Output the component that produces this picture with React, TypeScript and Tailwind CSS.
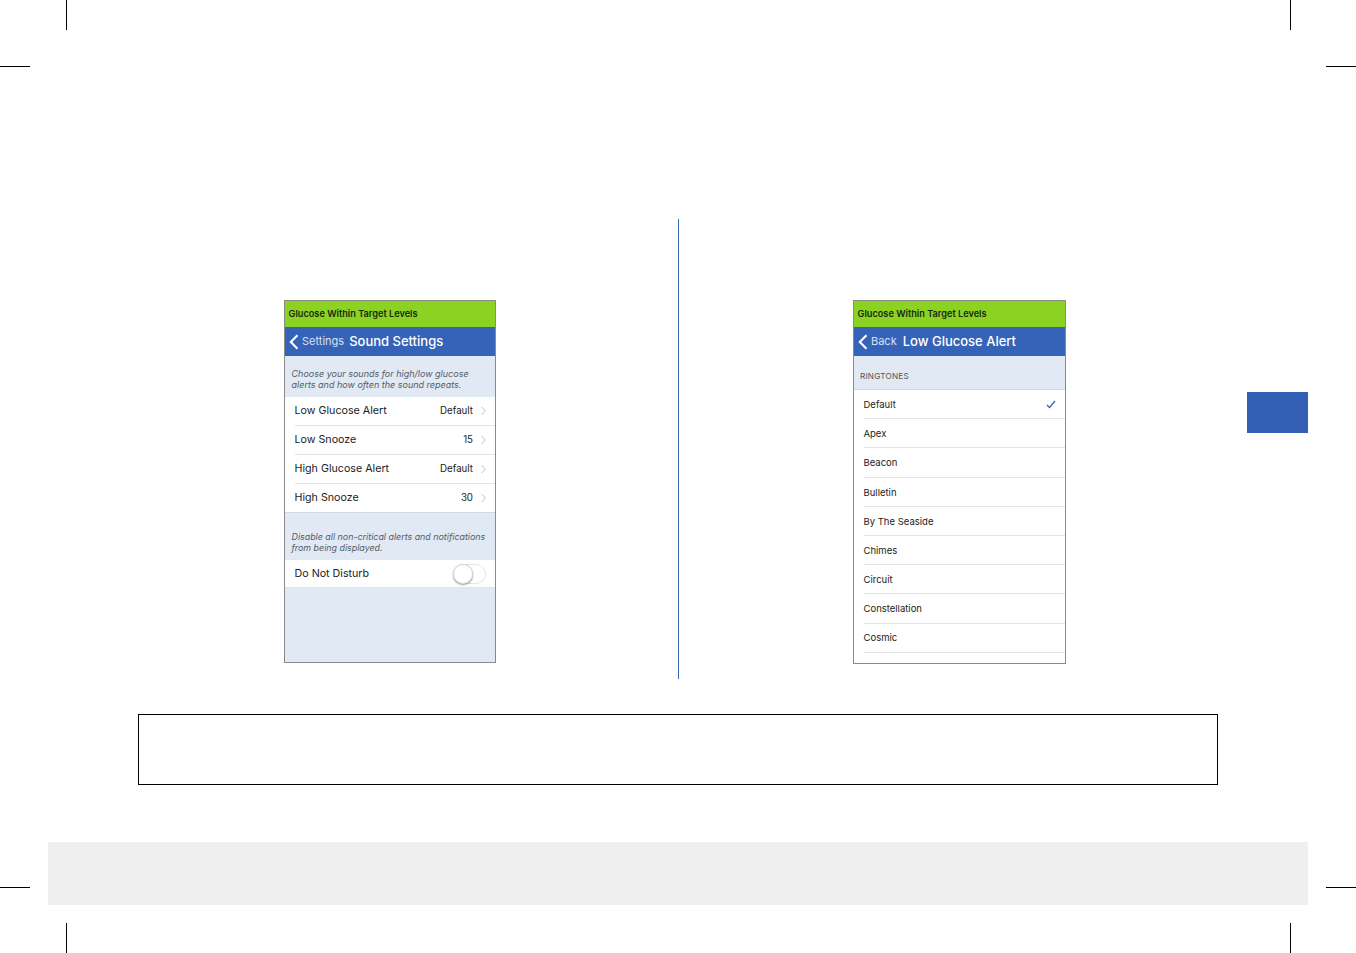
import React from "react";

const FONT = { fontFamily: '"Inter", "Liberation Sans", sans-serif' };

function Chevron() {
  return (
    <svg width="5" height="10" viewBox="0 0 5 10" fill="none" className="ml-[8px]">
      <path d="M0.6 1l3.8 4L0.6 9" stroke="#c0c0c6" strokeWidth="1" />
    </svg>
  );
}

function Back() {
  return (
    <svg width="10" height="16" viewBox="0 0 10 16" fill="none">
      <path d="M8.5 1.2L1.8 8l6.7 6.8" stroke="#fff" strokeWidth="2.1" />
    </svg>
  );
}

function Row({ label, value, last }: { label: string; value: string; last?: boolean }) {
  return (
    <div className="bg-white pl-[9.5px]">
      <div className={`flex items-center pr-[9px] ${last ? "h-[28px]" : "h-[29px] border-b border-[#e4e4e6]"}`}>
        <span className="text-[10.7px] text-[#222]">{label}</span>
        <span className="ml-auto text-[9.7px] text-[#222]">{value}</span>
        <Chevron />
      </div>
    </div>
  );
}

function Tone({ label, check }: { label: string; check?: boolean }) {
  return (
    <div className="pl-[9.5px]">
      <div className="h-[29.2px] flex items-center pt-[2px] pr-[9px] border-b border-[#e4e4e6]">
        <span className="text-[9.5px] text-[#222]">{label}</span>
        {check && (
          <svg width="10" height="9" viewBox="0 0 10 9" fill="none" className="ml-auto -mt-[2px]">
            <path d="M1 5l2.5 2.5L9 1" stroke="#3563b8" strokeWidth="1.3" />
          </svg>
        )}
      </div>
    </div>
  );
}

function Head({ back, title, gap }: { back: string; title: string; gap: string }) {
  return (
    <>
      <div className="h-[26px] bg-[#8bd223] flex items-center pl-[3.5px] text-[9.2px] font-semibold text-[#1a2a10] shrink-0">
        Glucose Within Target Levels
      </div>
      <div className="h-[29px] bg-[#3563b8] flex items-center pl-[4px] text-white shrink-0">
        <Back />
        <span className="ml-[3px] text-[11px] text-[#d5e0f2]">{back}</span>
        <span className={`${gap} text-[13px] font-medium`}>{title}</span>
      </div>
    </>
  );
}

function Note({ children, cls }: { children: React.ReactNode; cls: string }) {
  return <div className={`pl-[6.5px] leading-[11px] italic whitespace-nowrap text-[#555c68] ${cls}`}>{children}</div>;
}

export default function App() {
  return (
    <div className="relative w-[1356px] h-[953px] bg-white overflow-hidden" style={FONT}>
      {/* crop marks */}
      <div className="absolute left-[66px] top-0 w-px h-[30px] bg-black" />
      <div className="absolute left-[1290px] top-0 w-px h-[30px] bg-black" />
      <div className="absolute left-[66px] top-[923px] w-px h-[30px] bg-black" />
      <div className="absolute left-[1290px] top-[923px] w-px h-[30px] bg-black" />
      <div className="absolute left-0 top-[66px] w-[30px] h-px bg-black" />
      <div className="absolute left-[1326px] top-[66px] w-[30px] h-px bg-black" />
      <div className="absolute left-0 top-[887px] w-[30px] h-px bg-black" />
      <div className="absolute left-[1326px] top-[887px] w-[30px] h-px bg-black" />

      <div className="absolute left-[1247px] top-[392px] w-[61px] h-[41px] bg-[#3360b5]" />

      <div className="absolute left-[678px] top-[219px] w-px h-[460px] bg-[#3563b8]" />

      {/* left phone */}
      <div className="absolute left-[284px] top-[300px] w-[212px] h-[363px] border border-[#8a8a8a] bg-[#e1e9f4] flex flex-col">
        <Head back="Settings" title="Sound Settings" gap="ml-[5px]" />
        <Note cls="pt-[12px] h-[41px] text-[9px]">
          Choose your sounds for high/low glucose
          <br />
          alerts and how often the sound repeats.
        </Note>
        <Row label="Low Glucose Alert" value="Default" />
        <Row label="Low Snooze" value="15" />
        <Row label="High Glucose Alert" value="Default" />
        <Row label="High Snooze" value="30" last />
        <Note cls="pt-[18px] h-[48px] border-t border-[#d3d9e2] text-[8.9px]">
          Disable all non-critical alerts and notifications
          <br />
          from being displayed.
        </Note>
        <div className="h-[28px] bg-white flex items-center pt-[1px] pl-[9.5px] pr-[9px] border-b border-[#dfe3ea]">
          <span className="text-[10.7px] text-[#222]">Do Not Disturb</span>
          <div className="ml-auto relative w-[33px] h-[20px] -mt-[1px] rounded-full border border-[#e4e4e4] bg-white">
            <div className="absolute left-[-1px] top-[-1px] w-[20px] h-[20px] rounded-full bg-white border border-[#d8d8d8] shadow-[0_1px_2px_rgba(0,0,0,0.4)]" />
          </div>
        </div>
      </div>

      {/* right phone */}
      <div className="absolute left-[853px] top-[300px] w-[213px] h-[364px] border border-[#8a8a8a] bg-white flex flex-col">
        <Head back="Back" title="Low Glucose Alert" gap="ml-[6px]" />
        <div className="h-[34px] bg-[#e1e9f4] border-b border-[#d3d9e2] pl-[6px] pt-[15px] text-[8.2px] leading-[10px] text-[#555] tracking-[0.2px] shrink-0">
          RINGTONES
        </div>
        <Tone label="Default" check />
        <Tone label="Apex" />
        <Tone label="Beacon" />
        <Tone label="Bulletin" />
        <Tone label="By The Seaside" />
        <Tone label="Chimes" />
        <Tone label="Circuit" />
        <Tone label="Constellation" />
        <Tone label="Cosmic" />
      </div>

      {/* empty box */}
      <div className="absolute left-[138px] top-[714px] w-[1080px] h-[71px] border border-black" />

      {/* footer band */}
      <div className="absolute left-[48px] top-[842px] w-[1260px] h-[63px] bg-[#efefef]" />
    </div>
  );
}
